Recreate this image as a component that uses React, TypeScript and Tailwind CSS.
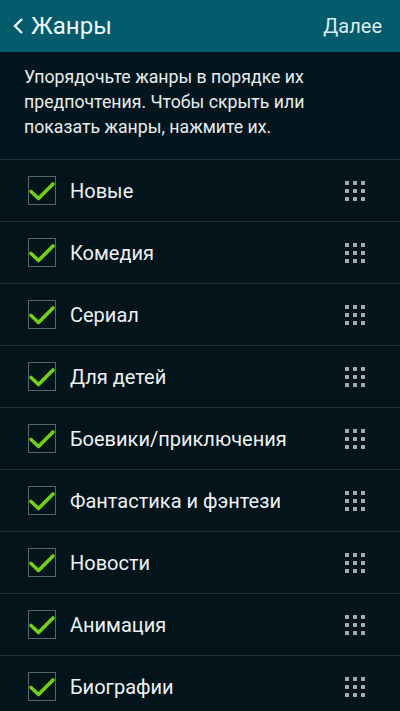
const genres = [
  "Новые",
  "Комедия",
  "Сериал",
  "Для детей",
  "Боевики/приключения",
  "Фантастика и фэнтези",
  "Новости",
  "Анимация",
  "Биографии",
];

function Grip() {
  return (
    <div className="grid grid-cols-3 gap-[4px] mr-[35px]">
      {Array.from({ length: 9 }).map((_, i) => (
        <span key={i} className="block w-[4px] h-[4px] bg-[#9aaab0]" />
      ))}
    </div>
  );
}

function CheckBox() {
  return (
    <div className="w-[28px] h-[29px] border-[1.5px] border-[#56666b] bg-[#03141b] relative">
      <svg viewBox="0 0 28 29" className="absolute inset-0 w-[28px] h-[29px] -ml-[1.5px] -mt-[1.5px]">
        <path d="M3 15.5 L10.5 22.5 L25 8" fill="none" stroke="#6fd312" strokeWidth="3.6" strokeLinecap="round" strokeLinejoin="round" />
      </svg>
    </div>
  );
}

export default function App() {
  return (
    <div className="w-[400px] h-[711px] overflow-hidden bg-[#03141b] font-['Roboto',sans-serif]">
      <header className="h-[52px] bg-[#045b6b] flex items-center justify-between pl-[12px] pr-[18px]">
        <div className="flex items-center">
          <svg viewBox="0 0 12 18" className="w-[12px] h-[18px]">
            <path d="M10 2 L3 9 L10 16" fill="none" stroke="#eef6f7" strokeWidth="2.4" />
          </svg>
          <span className="ml-[7px] text-[24px] text-[#eef6f7] leading-none">Жанры</span>
        </div>
        <span className="text-[20px] text-[#dcecee] leading-none">Далее</span>
      </header>
      <p className="pl-[24px] pr-[66px] pt-[13px] pb-[19px] text-[17.7px] leading-[25px] text-[#e8ecec] bg-[#03161e]">
        Упорядочьте жанры в порядке их предпочтения. Чтобы скрыть или показать жанры, нажмите их.
      </p>
      <ul>
        {genres.map((g) => (
          <li key={g} className="h-[62px] border-t border-[#223238] flex items-center pl-[28px]">
            <CheckBox />
            <span className="ml-[14px] flex-1 text-[20px] text-[#eef1f2]">{g}</span>
            <Grip />
          </li>
        ))}
      </ul>
    </div>
  );
}
